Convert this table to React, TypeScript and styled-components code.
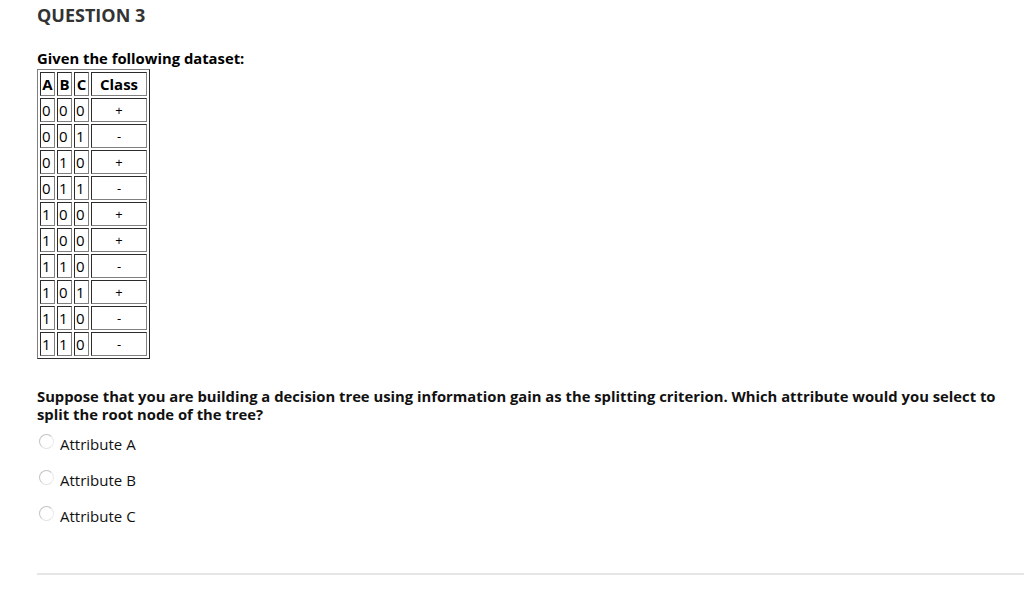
import styled, { createGlobalStyle } from "styled-components";

const GlobalStyle = createGlobalStyle`
  body {
    margin: 0;
    background: #ffffff;
    font-family: "Open Sans", "Liberation Sans", sans-serif;
    color: #000000;
  }
`;

const rows: [string, string, string, string][] = [
  ["0", "0", "0", "+"],
  ["0", "0", "1", "-"],
  ["0", "1", "0", "+"],
  ["0", "1", "1", "-"],
  ["1", "0", "0", "+"],
  ["1", "0", "0", "+"],
  ["1", "1", "0", "-"],
  ["1", "0", "1", "+"],
  ["1", "1", "0", "-"],
  ["1", "1", "0", "-"],
];

const options = ["Attribute A", "Attribute B", "Attribute C"];

export default function App() {
  return (
    <>
      <GlobalStyle />
      <Page>
        <Title>QUESTION 3</Title>
        <Body>
          <Lead>Given the following dataset:</Lead>
          <DataTable border={1} cellSpacing={2} cellPadding={1}>
            <tbody>
              <tr>
                <Head>A</Head>
                <Head>B</Head>
                <Head>C</Head>
                <Head $wide>Class</Head>
              </tr>
              {rows.map((r, i) => (
                <tr key={i}>
                  <Cell>{r[0]}</Cell>
                  <Cell>{r[1]}</Cell>
                  <Cell>{r[2]}</Cell>
                  <Cell $wide>{r[3]}</Cell>
                </tr>
              ))}
            </tbody>
          </DataTable>
          <Prompt>
            Suppose that you are building a decision tree using information gain
            as the splitting criterion. Which attribute would you select to
            split the root node of the tree?
          </Prompt>
          <Choices>
            {options.map((o) => (
              <Choice key={o}>
                <Radio />
                <span>{o}</span>
              </Choice>
            ))}
          </Choices>
        </Body>
        <Divider />
      </Page>
    </>
  );
}

const Page = styled.div`
  padding: 5px 0 0 37px;
  width: 980px;
`;

const Title = styled.h2`
  margin: 0;
  font-size: 18px;
  line-height: 20px;
  font-weight: 700;
  color: #333333;
`;

const Body = styled.div`
  padding-top: 23px;
`;

const Lead = styled.p`
  margin: 0 0 1px;
  font-size: 14.8px;
  line-height: 20px;
  font-weight: 700;
`;

const DataTable = styled.table`
  border-collapse: separate;
  border: 1px outset #808080;
  font-size: 15px;
`;

const Head = styled.th<{ $wide?: boolean }>`
  border: 1px inset #808080;
  padding: 1px;
  height: 20px;
  line-height: 20px;
  width: ${(p) => (p.$wide ? "52px" : "11px")};
  font-weight: 700;
  text-align: center;
`;

const Cell = styled.td<{ $wide?: boolean }>`
  border: 1px inset #808080;
  padding: 1px;
  height: 20px;
  line-height: 20px;
  width: ${(p) => (p.$wide ? "52px" : "11px")};
  text-align: ${(p) => (p.$wide ? "center" : "left")};
  font-size: ${(p) => (p.$wide ? "13px" : "15px")};
`;

const Prompt = styled.p`
  margin: 28px 0 0;
  font-size: 14.8px;
  line-height: 18px;
  font-weight: 700;
  color: #111111;
`;

const Choices = styled.div`
  display: flex;
  flex-direction: column;
  gap: 14px;
  margin-top: 10px;
`;

const Choice = styled.label`
  display: flex;
  align-items: center;
  gap: 6px;
  font-size: 15px;
  line-height: 22px;
  color: #111111;
  padding-left: 2px;
`;

const Radio = styled.span`
  display: inline-block;
  width: 15px;
  height: 15px;
  border-radius: 50%;
  border: 1px solid #c4c4c4;
  border-right-color: #ebebeb;
  border-bottom-color: #e2e2e2;
  box-sizing: border-box;
  margin-top: -6px;
`;

const Divider = styled.hr`
  margin: 46px 0 0;
  border: none;
  height: 2px;
  background: #e6e6e6;
  width: calc(100% + 50px);
`;
